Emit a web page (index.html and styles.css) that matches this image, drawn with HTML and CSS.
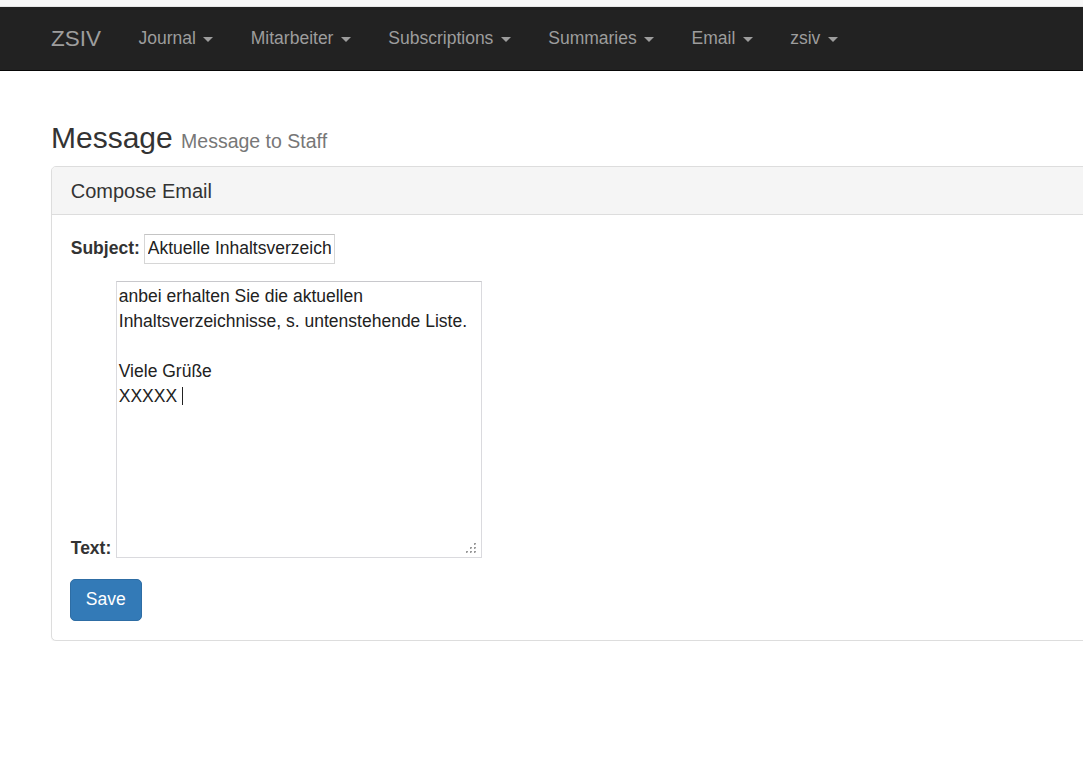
FILE: index.html
```html
<!DOCTYPE html>
<html lang="de">
<head>
<meta charset="utf-8">
<title>ZSIV – Message</title>
<link rel="stylesheet" href="styles.css">
</head>
<body>
<div class="topstrip"></div>
<nav class="navbar">
  <a class="brand" href="#">ZSIV</a>
  <ul class="nav">
    <li><a href="#">Journal <span class="caret"></span></a></li>
    <li><a href="#">Mitarbeiter <span class="caret"></span></a></li>
    <li><a href="#">Subscriptions <span class="caret"></span></a></li>
    <li><a href="#">Summaries <span class="caret"></span></a></li>
    <li><a href="#">Email <span class="caret"></span></a></li>
    <li><a href="#">zsiv <span class="caret"></span></a></li>
  </ul>
</nav>
<main class="container">
  <h3 class="page-title">Message <small>Message to Staff</small></h3>
  <section class="panel">
    <div class="panel-heading">
      <h3 class="panel-title">Compose Email</h3>
    </div>
    <div class="panel-body">
      <form class="compose">
        <div class="field subject-field">
          <label for="subject">Subject:</label>
          <input id="subject" class="subject-input" type="text" value="Aktuelle Inhaltsverzeichnisse">
        </div>
        <div class="field text-field">
          <label class="text-label">Text:</label>
          <div class="textbox" role="textbox" aria-multiline="true" contenteditable="true">anbei erhalten Sie die aktuellen
Inhaltsverzeichnisse, s. untenstehende Liste.

Viele Grüße
XXXXX <span class="cursor"></span><svg class="grip" width="12" height="12" viewBox="0 0 12 12" aria-hidden="true"><rect x="8" y="0" width="2" height="2" fill="#9a9a9a"/><rect x="4" y="4" width="2" height="2" fill="#9a9a9a"/><rect x="8" y="4" width="2" height="2" fill="#9a9a9a"/><rect x="0" y="8" width="2" height="2" fill="#9a9a9a"/><rect x="4" y="8" width="2" height="2" fill="#9a9a9a"/><rect x="8" y="8" width="2" height="2" fill="#9a9a9a"/><rect x="9" y="1" width="1" height="1" fill="#d0d0d0"/><rect x="5" y="5" width="1" height="1" fill="#d0d0d0"/><rect x="9" y="5" width="1" height="1" fill="#d0d0d0"/><rect x="1" y="9" width="1" height="1" fill="#d0d0d0"/><rect x="5" y="9" width="1" height="1" fill="#d0d0d0"/><rect x="9" y="9" width="1" height="1" fill="#d0d0d0"/></svg></div>
        </div>
        <button class="btn-primary" type="submit">Save</button>
      </form>
    </div>
  </section>
</main>
</body>
</html>
```

FILE: styles.css
```css
html {
  overflow-x: hidden;
}

body {
  margin: 0;
  background: #fff;
  color: #333;
  font-family: "Liberation Sans", Arial, Helvetica, sans-serif;
  font-size: 17.5px;
  line-height: 25px;
  overflow-x: hidden;
}

.topstrip {
  height: 6px;
  background: #f8f8f8;
  border-bottom: 1px solid #e6e6e6;
}

.navbar {
  display: flex;
  align-items: stretch;
  height: 62.5px;
  background: #222;
  border-bottom: 1.25px solid #080808;
  padding-left: 32.25px;
  margin-bottom: 25px;
}

.brand {
  display: block;
  padding: 18.75px;
  font-size: 22.5px;
  line-height: 25px;
  color: #9d9d9d;
  text-decoration: none;
}

.nav {
  display: flex;
  margin: 0;
  padding: 0;
  list-style: none;
}

.nav a {
  display: block;
  padding: 18.75px;
  line-height: 25px;
  color: #9d9d9d;
  text-decoration: none;
  white-space: nowrap;
}

.caret {
  display: inline-block;
  width: 0;
  height: 0;
  margin-left: 2.5px;
  vertical-align: middle;
  border-top: 5px solid #9d9d9d;
  border-left: 5px solid transparent;
  border-right: 5px solid transparent;
}

.container {
  display: flow-root;
  padding-left: 51px;
  margin-right: -300px;
}

.page-title {
  margin: 25px 0 12.5px;
  font-size: 30px;
  line-height: 1.1;
  font-weight: 500;
  color: #333;
}

.page-title small {
  font-size: 65%;
  font-weight: normal;
  line-height: 1;
  color: #777;
}

.panel {
  border: 1px solid #ddd;
  border-radius: 5px;
  background: #fff;
  box-shadow: 0 1px 1px rgba(0, 0, 0, 0.05);
}

.panel-heading {
  padding: 12.5px 18.75px;
  background: #f5f5f5;
  border-bottom: 1px solid #ddd;
  border-radius: 4px 4px 0 0;
}

.panel-title {
  margin: 0;
  font-size: 20px;
  line-height: 22px;
  font-weight: 500;
  color: #333;
}

.panel-body {
  padding: 18.75px;
}

.compose {
  margin: 0;
}

.field {
  display: flex;
  gap: 4px;
}

.field label {
  font-weight: bold;
}

.subject-field {
  align-items: baseline;
  margin-bottom: 17px;
}

.subject-input {
  box-sizing: border-box;
  width: 191px;
  height: 30px;
  margin: 0;
  padding: 0 3px;
  border: 1px solid #d6d6d6;
  border-top-color: #c4c4c4;
  font: inherit;
  color: #222;
  background: #fff;
}

.text-field {
  align-items: flex-end;
  margin-bottom: 21px;
}

.text-label {
  margin-bottom: -3px;
  margin-right: 0.5px;
}

.textbox {
  position: relative;
  box-sizing: border-box;
  width: 366px;
  height: 277px;
  padding: 2px 2px;
  border: 1px solid #dadade;
  border-top-color: #c8c8cc;
  white-space: pre-wrap;
  color: #222;
  outline: none;
  overflow: hidden;
}

.cursor {
  display: inline-block;
  width: 1px;
  height: 18px;
  margin-bottom: -3px;
  background: #222;
}

.grip {
  position: absolute;
  right: 3px;
  bottom: 2px;
}

.btn-primary {
  display: inline-block;
  margin-left: -1px;
  padding: 7.5px 15px;
  border: 1px solid #2e6da4;
  border-radius: 5px;
  background: #337ab7;
  color: #fff;
  font: inherit;
  line-height: 25px;
  cursor: pointer;
}
```
